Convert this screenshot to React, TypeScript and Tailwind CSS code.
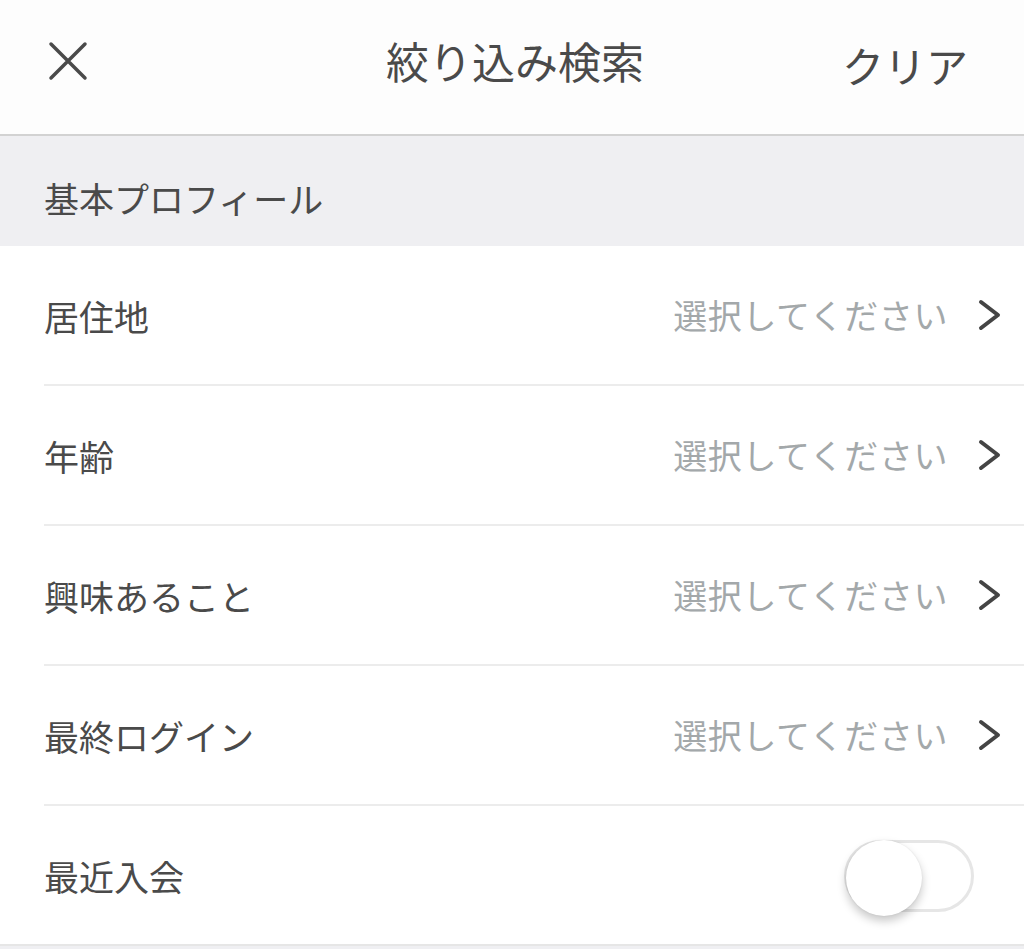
const font = "font-['Noto_Sans_CJK_JP','Noto_Sans',sans-serif]";

const rows = ["居住地", "年齢", "興味あること", "最終ログイン"];

function Chevron() {
  return (
    <svg width="24" height="32" viewBox="0 0 24 32" fill="none">
      <path
        d="M3 3 L20 16 L3 29"
        stroke="#444444"
        strokeWidth="4"
        strokeLinecap="round"
        strokeLinejoin="round"
      />
    </svg>
  );
}

export default function App() {
  return (
    <div className={`${font} w-[1024px] h-[949px] bg-[#efeff2] overflow-hidden text-[#4a4a4a]`}>
      <header className="h-[136px] bg-[#fdfdfd] border-b-2 border-[#d2d2d2] flex items-center pl-[48px] pr-[56px] pb-[14px]">
        <div className="flex-1 flex">
          <button aria-label="閉じる" className="w-[40px] h-[40px] flex items-center justify-center mt-[2px]">
            <svg width="40" height="40" viewBox="0 0 40 40" fill="none">
              <path d="M3 3 L37 37 M37 3 L3 37" stroke="#4a4a4a" strokeWidth="3.5" strokeLinecap="round" />
            </svg>
          </button>
        </div>
        <h1 className="text-[43px] leading-none ml-[14px]">絞り込み検索</h1>
        <div className="flex-1 flex justify-end">
          <button className="text-[42px] leading-none mt-[10px]">クリア</button>
        </div>
      </header>

      <div className="h-[110px] flex items-center pl-[44px] pt-[12px]">
        <h2 className="text-[35px] leading-none">基本プロフィール</h2>
      </div>

      <ul className="bg-white">
        {rows.map((label) => (
          <li key={label} className="pl-[44px]">
            <div className="h-[140px] border-b-2 border-[#ececec] flex items-center justify-between pr-[22px]">
              <span className="text-[35px] leading-none">{label}</span>
              <span className="flex items-center gap-[30px]">
                <span className="text-[34px] leading-none text-[#a3a8aa] tracking-[0.6px]">選択してください</span>
                <Chevron />
              </span>
            </div>
          </li>
        ))}
        <li className="h-[140px] border-b-2 border-[#e6e6e6] flex items-center justify-between pl-[44px] pr-[50px]">
          <span className="text-[35px] leading-none">最近入会</span>
          <div className="relative w-[130px] h-[72px] mt-[2px] rounded-full border-[3px] border-[#e6e6e6] bg-white">
            <div className="absolute left-[-1px] top-[-3px] w-[76px] h-[76px] rounded-full bg-white shadow-[0_5px_10px_rgba(0,0,0,0.22),0_0_2px_rgba(0,0,0,0.08)]" />
          </div>
        </li>
      </ul>
    </div>
  );
}
